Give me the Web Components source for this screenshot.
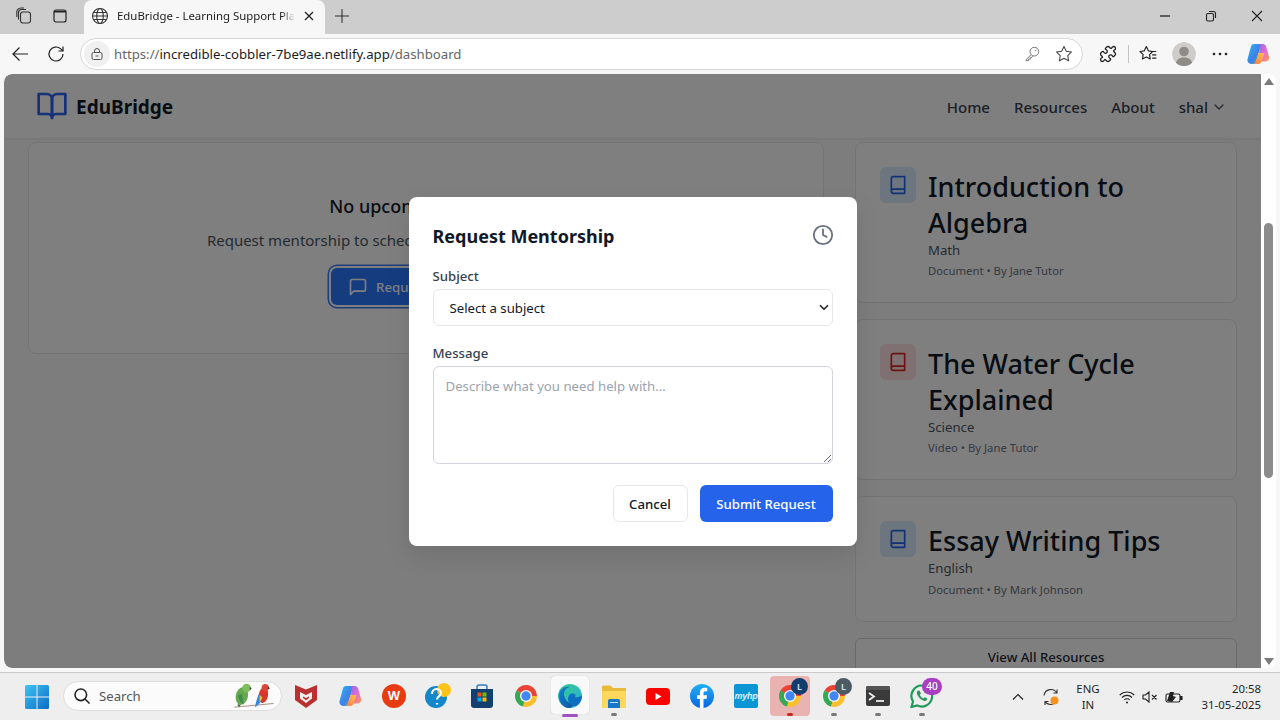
<!DOCTYPE html>
<html lang="en">
<head>
<meta charset="utf-8">
<title>EduBridge - Learning Support Platform</title>
<style>
html,body{margin:0;padding:0;width:1280px;height:720px;overflow:hidden;background:#f7f7f7;font-family:"Noto Sans","Open Sans",sans-serif}
desktop-shell{display:flex;flex-direction:column;width:1280px;height:720px}
</style>
</head>
<body>
<desktop-shell>
  <browser-tabbar></browser-tabbar>
  <browser-toolbar></browser-toolbar>
  <browser-viewport>
    <app-header></app-header>
    <page-main>
      <session-empty></session-empty>
      <resource-list>
        <resource-card title-text="Introduction to Algebra" subject="Math" meta="Document • By Jane Tutor" tone="blue"></resource-card>
        <resource-card title-text="The Water Cycle Explained" subject="Science" meta="Video • By Jane Tutor" tone="red"></resource-card>
        <resource-card title-text="Essay Writing Tips" subject="English" meta="Document • By Mark Johnson" tone="blue"></resource-card>
        <view-all-button>View All Resources</view-all-button>
      </resource-list>
    </page-main>
    <request-modal slot="overlay"></request-modal>
  </browser-viewport>
  <win-taskbar></win-taskbar>
</desktop-shell>
<script>
function def(name, css, html){
  customElements.define(name, class extends HTMLElement{
    constructor(){super();const r=this.attachShadow({mode:'open'});
      r.innerHTML='<style>'+css+'</style>'+(typeof html==='function'?html(this):html);}
  });
}
const COPILOT = id => `<svg width="24" height="24" viewBox="0 0 24 24"><defs>
<linearGradient id="${id}a" x1="0" y1="0" x2="1" y2="1"><stop offset="0" stop-color="#2bb6f0"/><stop offset=".6" stop-color="#3f7fe8"/><stop offset="1" stop-color="#4fd08a"/></linearGradient>
<linearGradient id="${id}b" x1="0" y1="0" x2="1" y2="1"><stop offset="0" stop-color="#8a6cf0"/><stop offset=".55" stop-color="#e86bd0"/><stop offset="1" stop-color="#ffa23c"/></linearGradient>
<linearGradient id="${id}c" x1="0" y1="1" x2="1" y2="0"><stop offset="0" stop-color="#ff7a4a"/><stop offset="1" stop-color="#ffc14a"/></linearGradient></defs>
<path d="M8 2h5c1 0 1.600.6 1.900 1.500L10 20c-.3 1-1.100 2-2.500 2H5.500C2.500 22 .8 19.500 1.600 16.800L4.800 5C5.300 3.200 6.300 2 8 2z" fill="url(#${id}a)"/>
<path d="M14 2h3c1.500 0 2.600 1 3.100 2.500l3 10.300c.7 2.500-1 4.700-3.500 4.700h-5.600c-1.200 0-1.800-1-1.500-2z" fill="url(#${id}b)"/>
<path d="M9.500 20l3-9h6l-2.800 8.500C15.200 21 14 22 12.500 22H7.500c1 0 1.700-.8 2-2z" fill="url(#${id}c)"/></svg>`;

def('desktop-shell','','<slot></slot>');
def('browser-tabbar',
`:host{display:flex;align-items:flex-start;height:34px;background:#cdcdcd;color:#1c1c1c;flex:none}
.ic{width:36px;height:32px;display:flex;align-items:center;justify-content:center;flex:none}
.tab{margin-left:6px;width:241px;height:34px;background:#f7f7f7;border-radius:8px 8px 0 0;display:flex;align-items:center;box-sizing:border-box;padding:0 0 2px 7px;flex:none}
.tab .t{margin-left:8px;width:180px;font-size:11.400px;line-height:16px;white-space:nowrap;overflow:hidden;-webkit-mask-image:linear-gradient(90deg,#000 165px,transparent 178px);mask-image:linear-gradient(90deg,#000 165px,transparent 178px)}
.tab .x{margin-left:6px;display:flex}
.plus{margin-left:6px;width:22px;height:32px;display:flex;align-items:center;justify-content:center}
.sp{flex:1}
.win{width:46px;height:32px;display:flex;align-items:center;justify-content:center;flex:none}
.lead{margin-left:6px}`,
`<div class="ic lead"><svg width="18" height="18" viewBox="0 0 18 18" fill="none" stroke="#333" stroke-width="1.100"><rect x="5.500" y="5" width="10" height="11" rx="2.500"/><path d="M3.500 12.500V5.500A3 3 0 0 1 6.500 2.500H11M1.800 10V5A4.500 4.500 0 0 1 6 1h3" /></svg></div>
<div class="ic"><svg width="16" height="16" viewBox="0 0 16 16" fill="none" stroke="#222" stroke-width="1.200"><rect x="2" y="2" width="12" height="12" rx="2"/><path d="M2 4.500h12V2.800H2z" fill="#222" stroke="none"/></svg></div>
<div class="tab"><svg width="18" height="18" viewBox="0 0 18 18" fill="none" stroke="#333" stroke-width="1.100"><circle cx="9" cy="9" r="7.500"/><ellipse cx="9" cy="9" rx="3.300" ry="7.500"/><path d="M1.500 9h15M2.500 5.500h13M2.500 12.500h13"/></svg>
<span class="t">EduBridge - Learning Support Platform</span>
<span class="x"><svg width="12" height="12" viewBox="0 0 12 12" stroke="#222" stroke-width="1.300"><path d="M2 2l8 8M10 2l-8 8"/></svg></span></div>
<div class="plus"><svg width="16" height="16" viewBox="0 0 16 16" stroke="#333" stroke-width="1.100"><path d="M8 1v14M1 8h14"/></svg></div>
<div class="sp"></div>
<div class="win"><svg width="12" height="12" viewBox="0 0 12 12" stroke="#222" stroke-width="1.300"><path d="M1 6h10"/></svg></div>
<div class="win"><svg width="12" height="12" viewBox="0 0 12 12" fill="none" stroke="#222" stroke-width="1.100"><rect x="1.500" y="3.500" width="7" height="7.500" rx="1.500"/><path d="M4 1.500h4.500a2 2 0 0 1 2 2V8"/></svg></div>
<div class="win"><svg width="12" height="12" viewBox="0 0 12 12" stroke="#222" stroke-width="1.100"><path d="M1 1l10 10M11 1L1 11"/></svg></div>`);

def('browser-toolbar',
`:host{display:flex;align-items:center;height:40px;background:#f7f7f7;flex:none;box-sizing:border-box}
.b{width:36px;height:32px;display:flex;align-items:center;justify-content:center;flex:none}
.addr{margin-left:6px;width:1003px;height:32px;box-sizing:border-box;background:#fff;border:1px solid #d6d6d6;border-radius:16px;display:flex;align-items:center;flex:none;padding-left:3px;padding-right:2px}
.lock{width:26px;height:26px;border-radius:13px;background:#f0f0f0;display:flex;align-items:center;justify-content:center;flex:none}
.url{margin-left:4px;font-size:13.200px;color:#666;white-space:nowrap;flex:1}
.url b{font-weight:400;color:#1c1c1c}
.a{width:32px;display:flex;justify-content:center}
.sep{width:1px;height:18px;background:#c4c4c4;flex:none}
.first{margin-left:2px}
.tb{width:40px;display:flex;justify-content:center;flex:none}
.ava{width:24px;height:24px;border-radius:50%;display:block}`,
`<div class="b first"><svg width="18" height="18" viewBox="0 0 18 18" fill="none" stroke="#222" stroke-width="1.200"><path d="M17 9H2M8.500 2.500L2 9l6.500 6.500"/></svg></div>
<div class="b"><svg width="18" height="18" viewBox="0 0 18 18" fill="none" stroke="#222" stroke-width="1.200"><path d="M16 9a7 7 0 1 1-2.200-5.100L16 6"/><path d="M16 1.500V6h-4.500"/></svg></div>
<div class="addr"><span class="lock"><svg width="14" height="14" viewBox="0 0 14 14" fill="none" stroke="#555" stroke-width="1"><rect x="2" y="5.500" width="10" height="7" rx="1.500"/><path d="M4.500 5.500V4a2.500 2.500 0 0 1 5 0v1.500M5.500 9h3"/></svg></span>
<span class="url">https://<b>incredible-cobbler-7be9ae.netlify.app</b>/dashboard</span>
<span class="a"><svg width="16" height="16" viewBox="0 0 24 24" fill="none" stroke="#777" stroke-width="1.500" stroke-linejoin="round"><circle cx="15.500" cy="8.500" r="6.500"/><path d="M10.800 13L3 20.500V22h4v-2.500h2.500V17h2.500l1-1.600"/><circle cx="17.500" cy="6.500" r="1" fill="#777" stroke="none"/></svg></span>
<span class="a"><svg width="18" height="18" viewBox="0 0 24 24" fill="none" stroke="#444" stroke-width="1.400" stroke-linejoin="round"><polygon points="12 2 15.090 8.260 22 9.270 17 14.140 18.180 21.020 12 17.770 5.820 21.020 7 14.140 2 9.270 8.910 8.260 12 2"/></svg></span></div>
<div class="tb" style="margin-left:5px"><svg width="18" height="18" viewBox="0 0 24 24" fill="none" stroke="#222" stroke-width="1.700"><path d="M19.439 7.850c-.049.322.059.648.289.878l1.568 1.568c.47.47.706 1.087.706 1.704s-.235 1.233-.706 1.704l-1.611 1.611a.98.98 0 0 1-.837.276c-.47-.07-.802-.48-.968-.925a2.501 2.501 0 1 0-3.214 3.214c.446.166.855.497.925.968a.979.979 0 0 1-.276.837l-1.610 1.610a2.404 2.404 0 0 1-1.705.707 2.402 2.402 0 0 1-1.704-.706l-1.568-1.568a1.026 1.026 0 0 0-.877-.29c-.493.074-.84.504-1.020.968a2.500 2.500 0 1 1-3.237-3.237c.464-.18.894-.527.967-1.020a1.026 1.026 0 0 0-.289-.877l-1.568-1.568A2.402 2.402 0 0 1 1.998 12c0-.617.236-1.234.706-1.704L4.230 8.770c.24-.24.581-.353.917-.303.515.077.877.528 1.073 1.010a2.500 2.500 0 1 0 3.259-3.259c-.482-.196-.933-.558-1.010-1.073-.05-.336.062-.676.303-.917l1.525-1.525A2.402 2.402 0 0 1 12 1.998c.617 0 1.234.236 1.704.706l1.568 1.568c.23.23.556.338.877.29.493-.074.84-.504 1.020-.968a2.500 2.500 0 1 1 3.237 3.237c-.464.18-.894.527-.967 1.020Z"/></svg></div>
<span class="sep"></span>
<div class="tb" style="margin-left:-1px"><svg width="20" height="20" viewBox="0 0 24 24" fill="none" stroke="#222" stroke-width="1.400" stroke-linejoin="round"><path d="M10 3l2.600 5.300 5 .7-3.800 3.700.9 5.300-4.700-2.500L5.300 18l.9-5.300L2.400 9l5-.7z"/><path d="M16 9h6M17 13h5M17 17h5" /></svg></div>
<div class="tb" style="margin-left:-4px"><svg class="ava" viewBox="0 0 24 24"><circle cx="12" cy="12" r="12" fill="#cfccc9"/><circle cx="12" cy="9.500" r="4.800" fill="#8f8b87"/><path d="M3.500 24c0-6 3.500-8.500 8.500-8.500s8.500 2.500 8.500 8.500z" fill="#8f8b87"/></svg></div>
<div class="tb" style="margin-left:-4px"><svg width="16" height="4" viewBox="0 0 16 4" fill="#222"><circle cx="2" cy="2" r="1.300"/><circle cx="8" cy="2" r="1.300"/><circle cx="14" cy="2" r="1.300"/></svg></div>
<div class="tb" style="margin-left:-2px">${COPILOT('tc')}</div>`);

def('browser-viewport',
`:host{display:block;flex:none;height:594px;margin:0 4px;background:#fff;border-radius:8px;overflow:hidden}
.row{display:flex;height:100%}
.page{position:relative;width:1257px;flex:none;display:flex;flex-direction:column;background:#fafafa;overflow:hidden;border-radius:8px 0 0 8px}
.ov{position:absolute;inset:0;background:rgba(0,0,0,.5);display:flex;align-items:center;justify-content:center}
.sb{flex:1;background:#fff;display:flex;flex-direction:column;align-items:center;position:relative}
.thumb{position:absolute;left:3px;top:149px;width:9px;height:255px;border-radius:5px;background:#8b8b8b}
.up{margin-top:4px;width:0;height:0;border:5px solid transparent;border-bottom:7px solid #7a7a7a;border-top:0}
.dn{margin-top:auto;margin-bottom:3px;width:0;height:0;border:5px solid transparent;border-top:7px solid #7a7a7a;border-bottom:0}`,
`<div class="row"><div class="page"><slot></slot><div class="ov"><slot name="overlay"></slot></div></div>
<div class="sb"><span class="up"></span><span class="thumb"></span><span class="dn"></span></div></div>`);

def('app-header',
`:host{display:flex;align-items:center;flex:none;height:64px;background:#fff;border-bottom:1px solid #f0f0f0;padding:0 34px 0 32px;box-shadow:0 1px 2px rgba(0,0,0,.05)}
.logo{display:flex;align-items:center;gap:8px}
.name{font-size:19px;font-weight:700;color:#111827;line-height:28px;padding-top:2px}
nav{margin-left:auto;display:flex;align-items:center;gap:24px;font-size:15px;font-weight:500;color:#374151;padding-top:2px}
.u{display:flex;align-items:center;gap:3px}`,
`<div class="logo"><svg width="32" height="32" viewBox="0 0 24 24" fill="none" stroke="#2a62f0" stroke-width="2" stroke-linecap="round" stroke-linejoin="round"><path d="M2 3h6a4 4 0 0 1 4 4v14a3 3 0 0 0-3-3H2z"/><path d="M22 3h-6a4 4 0 0 0-4 4v14a3 3 0 0 1 3-3h7z"/></svg><span class="name">EduBridge</span></div>
<nav><span>Home</span><span>Resources</span><span>About</span><span class="u">shal <svg width="16" height="16" viewBox="0 0 24 24" fill="none" stroke="#4b5563" stroke-width="2" stroke-linecap="round" stroke-linejoin="round"><path d="m6 9 6 6 6-6"/></svg></span></nav>`);

def('page-main',
`:host{display:grid;grid-template-columns:796px 382px;column-gap:31px;align-items:start;padding:3px 24px 0;overflow:hidden;flex:1;min-height:0}`,
`<slot></slot>`);

def('session-empty',
`:host{display:block;background:#fff;border:1px solid #e5e7eb;border-radius:8px;box-sizing:border-box;height:212px;padding:49px 24px 0;text-align:center}
h3{margin:0;font-size:18px;line-height:28px;font-weight:500;color:#111827}
p{margin:8px 0 16px;font-size:15px;line-height:24px;color:#4b5563}
.btn{display:inline-flex;align-items:center;gap:8px;height:37px;padding:0 17px;background:#2878ff;color:#fff;font-size:13.200px;font-weight:500;border-radius:6px;box-shadow:0 0 0 2px #fff,0 0 0 3.500px #3f7af5}`,
`<h3>No upcoming sessions</h3><p>Request mentorship to schedule your first session with a tutor</p>
<span class="btn"><svg width="20" height="20" viewBox="0 0 24 24" fill="none" stroke="#fff" stroke-width="2" stroke-linecap="round" stroke-linejoin="round"><path d="M21 15a2 2 0 0 1-2 2H7l-4 4V5a2 2 0 0 1 2-2h14a2 2 0 0 1 2 2z"/></svg>Request Mentorship</span>`);

def('resource-list',`:host{display:flex;flex-direction:column;gap:16px}`,`<slot></slot>`);

def('resource-card',
`:host{display:flex;gap:12px;background:#fff;border:1px solid #e5e7eb;border-radius:8px;box-sizing:border-box;padding:24px 24px 23px}
.i{width:36px;height:36px;border-radius:6px;display:flex;align-items:center;justify-content:center;flex:none}
.blue{background:#dbeafe;color:#2563eb}.red{background:#fee2e2;color:#dc2626}
h3{margin:2px 0 0;font-size:27px;line-height:35.500px;font-weight:500;color:#111827}
.s{font-size:13.200px;line-height:20px;color:#4b5563;margin-top:-.5px}
.m{font-size:11.300px;line-height:16px;color:#6b7280;margin-top:3.500px}`,
el=>`<div class="i ${el.getAttribute('tone')}"><svg width="20" height="20" viewBox="0 0 24 24" fill="none" stroke="currentColor" stroke-width="2" stroke-linecap="round" stroke-linejoin="round"><path d="M4 19.500v-15A2.500 2.500 0 0 1 6.500 2H20v20H6.500a2.500 2.500 0 0 1 0-5H20"/></svg></div>
<div><h3>${el.getAttribute('title-text')}</h3><div class="s">${el.getAttribute('subject')}</div><div class="m">${el.getAttribute('meta')}</div></div>`);

def('view-all-button',
`:host{display:block;background:#fff;border:1px solid #d1d5db;border-radius:6px;height:38px;line-height:36px;text-align:center;font-size:13.200px;font-weight:500;color:#1f2937;box-sizing:border-box}`,
`<slot></slot>`);

const CARET="url(\"data:image/svg+xml,%3Csvg xmlns='http://www.w3.org/2000/svg' width='10' height='7' viewBox='0 0 10 7'%3E%3Cpath d='M1 1.200l4 4 4-4' fill='none' stroke='%23222' stroke-width='1.600'/%3E%3C/svg%3E\")";
def('request-modal',
`:host{display:block;box-sizing:border-box;width:448px;height:349px;background:#fff;border-radius:8px;padding:24px;box-shadow:0 10px 25px rgba(0,0,0,.1)}
.h{display:flex;justify-content:space-between;align-items:center;height:28px;margin-bottom:17px}
h2{margin:0;font-size:18px;line-height:28px;font-weight:700;color:#111827;padding-top:2px}
label{display:block;font-size:13.200px;line-height:20px;font-weight:500;color:#374151;margin-bottom:3px}
select,textarea{display:block;width:400px;box-sizing:border-box;font-family:inherit;font-size:13.200px;color:#111827;background-color:#fff;border:1px solid #e5e7eb;border-radius:6px;outline:none;margin:0}
select{height:37px;padding:2px 12px 0 16px;appearance:none;-webkit-appearance:none;background-image:${CARET};background-repeat:no-repeat;background-position:right 3px center}
textarea{height:98px;padding:8px 12px;line-height:22px;border-color:#d1d5db}
textarea::placeholder{color:#9ca3af;opacity:1}
.a{display:flex;justify-content:flex-end;gap:12px;margin-top:21px}
.btn{height:37px;box-sizing:border-box;border-radius:6px;font-family:inherit;font-weight:500;font-size:13.200px;display:flex;align-items:center;justify-content:center;padding:1px 0 0}
.c{width:75px;background:#fff;border:1px solid #e5e7eb;color:#111827}
.s{width:133px;background:#2563eb;color:#fff;border:0}`,
`<div class="h"><h2>Request Mentorship</h2><svg style="margin-right:-1px" width="22" height="22" viewBox="0 0 24 24" fill="none" stroke="#6b7280" stroke-width="2" stroke-linecap="round" stroke-linejoin="round"><circle cx="12" cy="12" r="10"/><polyline points="12 6 12 12 16 14"/></svg></div>
<div style="margin-bottom:17px"><label>Subject</label><select><option>Select a subject</option></select></div>
<div><label>Message</label><textarea placeholder="Describe what you need help with..."></textarea></div>
<div class="a"><button class="btn c">Cancel</button><button class="btn s">Submit Request</button></div>`);

const chrome=(badge,bg)=>`<span style="position:relative;display:block;width:24px;height:24px"><svg width="24" height="24" viewBox="0 0 24 24"><path d="M12 12L2.470 6.500A11 11 0 0 1 23 12Z" fill="#ea4335"/><path d="M12 12L23 12A11 11 0 0 1 9 22.600Z" fill="#fbc02d"/><path d="M12 12L9 22.600A11 11 0 0 1 2.470 6.500Z" fill="#34a853"/><circle cx="12" cy="12" r="6" fill="#fff"/><circle cx="12" cy="12" r="4.700" fill="#4285f4"/></svg>${badge?`<span style="position:absolute;right:-6px;top:-6px;width:17px;height:17px;border-radius:50%;background:${bg};color:#d8e4f0;font:600 9px/17px 'Noto Sans',sans-serif;text-align:center">L</span>`:''}</span>`;

def('task-icon',
`:host{display:flex;width:44px;height:47px;align-items:center;justify-content:center;position:relative;flex:none}
.d{position:absolute;left:50%;bottom:4px;width:6px;height:3px;margin-left:-3px;border-radius:2px;background:#7a7a7a}
:host([run=none]) .d{display:none}
:host([run=edge]) .d{width:16px;margin-left:-8px;background:#a34fc4;bottom:3px}
:host([run=red]) .d{background:#c8251f}
:host([run=edge])::before{content:"";position:absolute;left:3px;top:3px;width:38px;height:38px;border-radius:4px;background:#f9f9f9;box-shadow:0 0 1px rgba(0,0,0,.25)}
:host([run=red])::before{content:"";position:absolute;left:2px;top:3px;width:40px;height:40px;border-radius:4px;background:#e8b3b1}
.w{position:relative;display:flex;margin-top:-1px}`,
`<span class="w"><slot></slot></span><span class="d"></span>`);

def('win-taskbar',
`:host{display:flex;align-items:flex-start;margin-top:4px;height:47px;border-top:1px solid #c9c9c9;background:#eeeeee;color:#1f1f1f;flex:none}
.st{margin-left:25px;width:24px;height:47px;display:flex;align-items:center;flex:none}
.search{margin-left:14px;width:219px;height:30px;margin-top:8px;box-sizing:border-box;background:#fbfbfb;border:1px solid #dedede;border-radius:15px;display:flex;align-items:center;padding-left:9px;flex:none;font-size:13.200px;color:#555}
.search .lb{margin-left:8px;flex:1}
.apps{display:flex;margin-left:2px;flex:none}
.tray{margin-left:68px;display:flex;align-items:center;height:47px;flex:none}
.lang{font-size:11.400px;line-height:16px;text-align:center;width:36px;margin-left:9px}
.clock{font-size:11.400px;line-height:16px;text-align:right;width:70px;margin-left:8px}
.myhp{display:block;width:24px;height:24px;background:#0d96d6;border-radius:2px;color:#d8f2ff;font:italic 700 9px/24px "Liberation Sans",sans-serif;text-align:center;letter-spacing:-.3px}
.wbadge{position:absolute;right:-8px;top:-6px;width:20px;height:17px;border-radius:9px;background:#a83fc0;color:#fff;font:500 10px/17px "Noto Sans",sans-serif;text-align:center}
.wps{display:block;width:24px;height:24px;border-radius:50%;background:#ea3a14;color:#fff;font:700 13px/24px "Liberation Sans",sans-serif;text-align:center}`,
`<div class="st"><svg width="24" height="24" viewBox="0 0 24 24"><defs><linearGradient id="w" x1="0" y1="0" x2="1" y2="1"><stop offset="0" stop-color="#3fc4f5"/><stop offset="1" stop-color="#0a6cc4"/></linearGradient></defs><path d="M0 1.500A1.500 1.500 0 0 1 1.500 0h10v11.500H0zM12.500 0H22.500A1.500 1.500 0 0 1 24 1.500V11.500H12.500zM0 12.500h11.500V24H1.500A1.500 1.500 0 0 1 0 22.500zM12.500 12.500H24V22.500A1.500 1.500 0 0 1 22.500 24H12.500z" fill="url(#w)"/></svg></div>
<div class="search"><svg width="18" height="18" viewBox="0 0 18 18" fill="none" stroke="#222" stroke-width="1.600"><circle cx="7.800" cy="7.800" r="5.800"/><path d="M12 12l4.500 4.500"/></svg><span class="lb">Search</span>
<svg width="46" height="28" viewBox="0 0 46 30" style="margin-right:4px"><path d="M2 27l42-4" stroke="#a58a78" stroke-width="1"/><ellipse cx="10" cy="15" rx="6.500" ry="9.500" fill="#66a84e" transform="rotate(12 10 15)"/><circle cx="15" cy="6.500" r="4.500" fill="#7fbe5c"/><path d="M18.500 5l2 2-2 2z" fill="#444"/><path d="M6 14c1 6 3 9 6 10l-2-11z" fill="#3f8a4f"/><path d="M5 24l2 3 2-3z" fill="#3c6e3c"/><ellipse cx="33" cy="14" rx="5" ry="8.500" fill="#d8382c" transform="rotate(10 33 14)"/><circle cx="35" cy="6" r="3.800" fill="#e0453a"/><path d="M38 4.500l2 2.500-2.300 1z" fill="#333"/><path d="M28 13c-2 5-3 9-4 14 4-2 7-6 8-11z" fill="#3c86d8"/><path d="M29 14l3 3-3 5z" fill="#f0c42c"/></svg></div>
<div class="apps">
<task-icon run="none"><svg width="22" height="24" viewBox="0 0 22 24"><path d="M0 1l11 4.500L22 1v15l-11 8L0 16z" fill="#b8312f"/><path d="M5 8l6 3 6-3v6.500L11 19l-6-4.500z" fill="#eeeeee"/><path d="M8 12.500l3 1.500 3-1.500v1.500l-3 2.200L8 14z" fill="#b8312f"/></svg></task-icon>
<task-icon run="none">${COPILOT('tk')}</task-icon>
<task-icon run="none"><span class="wps">W</span></task-icon>
<task-icon run="none"><span style="display:block;width:26px;height:26px"><svg width="26" height="26" viewBox="0 0 26 26"><circle cx="11" cy="14" r="11" fill="#1387c9"/><circle cx="19" cy="7" r="7" fill="#fcc419"/><path d="M7 11c0-3 2-5 4.500-5s4.500 2 4.500 4.500-4 3-4 6M12 20v1.500" fill="none" stroke="#fff" stroke-width="2.200"/></svg></span></task-icon>
<task-icon run="none"><svg width="24" height="24" viewBox="0 0 24 24"><path d="M1 5h22v16a3 3 0 0 1-3 3H4a3 3 0 0 1-3-3z" fill="#13406f"/><path d="M7 5V3a2 2 0 0 1 2-2h6a2 2 0 0 1 2 2v2" fill="none" stroke="#2d7dc4" stroke-width="1.500"/><rect x="7.500" y="8.500" width="4" height="4" fill="#f25022"/><rect x="12.500" y="8.500" width="4" height="4" fill="#7fba00"/><rect x="7.500" y="13.500" width="4" height="4" fill="#00a4ef"/><rect x="12.500" y="13.500" width="4" height="4" fill="#ffb900"/></svg></task-icon>
<task-icon run="none">${chrome()}</task-icon>
<task-icon run="edge"><svg width="24" height="24" viewBox="0 0 24 24"><defs><linearGradient id="e1" x1="0" y1="0" x2="1" y2=".8"><stop offset="0" stop-color="#36c98a"/><stop offset="1" stop-color="#2bb4d4"/></linearGradient><linearGradient id="e2" x1="0" y1="0" x2="1" y2="1"><stop offset="0" stop-color="#1383d4"/><stop offset="1" stop-color="#0b4f9c"/></linearGradient></defs><circle cx="12" cy="12" r="12" fill="url(#e1)"/><path d="M1 12C1 5 7 2 12 3 7 4 5 8 6.500 13c1.500 5 7 8 10.500 7-2 2-4 4-6 4C5 24 1 18 1 12z" fill="url(#e2)"/><path d="M10 15c0-4 2.500-6 5.500-5.500 2 .3 2.500 2 1.500 3.500 3 .8 5.500-.3 7-2 .3 4-2 9-6 11-4 .8-8-3-8-7z" fill="#0e6fc2"/></svg></task-icon>
<task-icon><svg width="24" height="24" viewBox="0 0 24 24"><path d="M0 3a1.500 1.500 0 0 1 1.500-1.500h7L11 4h13v19a1 1 0 0 1-1 1H1a1 1 0 0 1-1-1z" fill="#e8b93a"/><path d="M0 7h24v16a1 1 0 0 1-1 1H1a1 1 0 0 1-1-1z" fill="#fbd75b"/><path d="M6 17a2 2 0 0 1 2-2h8a2 2 0 0 1 2 2v7H6z" fill="#1577c7"/><path d="M8 18.500h8" stroke="#bfe3ff" stroke-width="1"/></svg></task-icon>
<task-icon run="none"><svg width="24" height="17" viewBox="0 0 24 17"><rect width="24" height="17" rx="4" fill="#f00"/><path d="M9.500 5l6 3.500-6 3.500z" fill="#fff"/></svg></task-icon>
<task-icon run="none"><svg width="24" height="24" viewBox="0 0 24 24"><defs><linearGradient id="fb" x1="0" y1="0" x2="0" y2="1"><stop offset="0" stop-color="#1fb0f5"/><stop offset="1" stop-color="#0a66e0"/></linearGradient></defs><circle cx="12" cy="12" r="12" fill="url(#fb)"/><path d="M13.500 24v-9h3l.6-3.700h-3.600V9.200c0-1.100.4-1.900 2-1.900h1.700V4c-.6-.1-1.600-.2-2.700-.2-2.800 0-4.600 1.600-4.600 4.700v2.800H7v3.700h2.900v9z" fill="#fff"/></svg></task-icon>
<task-icon run="none"><span class="myhp">myhp</span></task-icon>
<task-icon run="red">${chrome(true,'#123e6e')}</task-icon>
<task-icon>${chrome(true,'#4c5a63')}</task-icon>
<task-icon><svg width="24" height="20" viewBox="0 0 24 20"><rect width="24" height="20" rx="2" fill="#3a3a3a"/><rect width="24" height="4" rx="1.500" fill="#555"/><path d="M3 7l5 3.500-5 3.500" fill="none" stroke="#eee" stroke-width="1.800"/><path d="M10 15h8" stroke="#eee" stroke-width="1.800"/></svg></task-icon>
<task-icon><span style="position:relative;display:block;width:24px;height:24px"><svg width="24" height="24" viewBox="0 0 24 24" fill="none"><path d="M12 1.500A10.500 10.500 0 0 0 3 17.500L1.500 23l5.700-1.500A10.500 10.500 0 1 0 12 1.500z" stroke="#23985a" stroke-width="2.200"/><path d="M8 6.500c-1.500 1-1.500 3 0 5.500s4 4.500 6.500 5c1.500.2 3-1 2.800-2.500l-2.600-1.300-1.300 1.300c-1.500-.5-3-2-3.600-3.700l1.100-1.200L9.600 6.800z" fill="#23985a"/></svg><span class="wbadge">40</span></span></task-icon>
</div>
<div class="tray">
<svg width="12" height="8" viewBox="0 0 12 8" fill="none" stroke="#222" stroke-width="1.200"><path d="M1 6.500l5-5 5 5"/></svg>
<svg style="margin-left:17px" width="20" height="20" viewBox="0 0 20 20" fill="none" stroke="#333" stroke-width="1.100"><path d="M3 8.500A7 7 0 0 1 16 6M16 2.500V6h-3.500M16.500 12A7 7 0 0 1 4 14.500M4 18v-3.500h3.500"/><circle cx="13.500" cy="13.500" r="4" fill="#f6921e" stroke="none"/></svg>
<div class="lang">ENG<br>IN</div>
<svg style="margin-left:13px" width="16" height="14" viewBox="0 0 16 14" fill="none" stroke="#222" stroke-width="1.100"><path d="M.7 5a10.500 10.500 0 0 1 14.600 0M3 7.500a7 7 0 0 1 10 0M5.300 10a3.600 3.600 0 0 1 5.400 0"/><circle cx="8" cy="12.500" r="1" fill="#222" stroke="none"/></svg>
<svg style="margin-left:7px" width="16" height="14" viewBox="0 0 16 14" fill="none" stroke="#222" stroke-width="1.100"><path d="M1 5v4h2.500L7 12V2L3.500 5zM10 5l4.500 4.500M14.500 5L10 9.500"/></svg>
<svg style="margin-left:7px" width="18" height="14" viewBox="0 0 18 14" fill="none" stroke="#222" stroke-width="1.100"><rect x="1" y="4" width="14" height="8" rx="1.500"/><path d="M15.500 6.500h1.500v3h-1.500z" fill="#222"/><path d="M2 11l3-9h4l-1 4 3 1-4 5z" fill="#222" stroke="none"/></svg>
<div class="clock">20:58<br>31-05-2025</div>
</div>`);
</script>
</body>
</html>
